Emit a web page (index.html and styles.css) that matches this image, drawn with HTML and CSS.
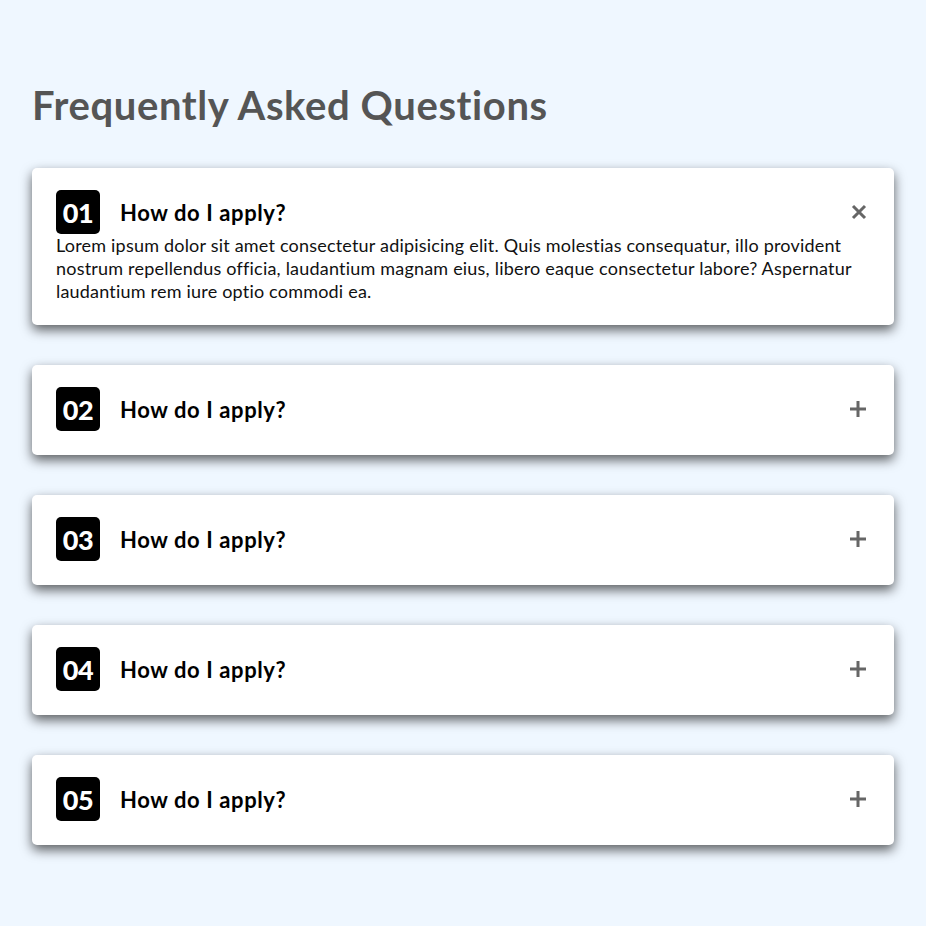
FILE: index.html
```html
<!DOCTYPE html>
<html lang="en">
<head>
  <meta charset="UTF-8">
  <meta name="viewport" content="width=device-width, initial-scale=1.0">
  <title>FAQ</title>
  <link rel="stylesheet" href="styles.css">
</head>
<body>

  <main class="faq">
    <h1 class="faq-title">Frequently Asked Questions</h1>

    <div class="faq-item open">
      <div class="faq-head">
        <span class="faq-num">01</span>
        <h3 class="faq-question">How do I apply?</h3>
        <button class="faq-toggle" aria-label="Toggle">
          <svg class="icon-close" viewBox="0 0 16 16" width="16" height="16"><path d="M2 2L14 14M14 2L2 14" /></svg>
          <svg class="icon-plus" viewBox="0 0 18 18" width="18" height="18"><path d="M9 1V17M1 9H17" /></svg>
        </button>
      </div>
      <p class="faq-answer">Lorem ipsum dolor sit amet consectetur adipisicing elit. Quis molestias consequatur, illo provident nostrum repellendus officia, laudantium magnam eius, libero eaque consectetur labore? Aspernatur laudantium rem iure optio commodi ea.</p>
    </div>

    <div class="faq-item">
      <div class="faq-head">
        <span class="faq-num">02</span>
        <h3 class="faq-question">How do I apply?</h3>
        <button class="faq-toggle" aria-label="Toggle">
          <svg class="icon-close" viewBox="0 0 16 16" width="16" height="16"><path d="M2 2L14 14M14 2L2 14" /></svg>
          <svg class="icon-plus" viewBox="0 0 18 18" width="18" height="18"><path d="M9 1V17M1 9H17" /></svg>
        </button>
      </div>
      <p class="faq-answer">Lorem ipsum dolor sit amet consectetur adipisicing elit. Quis molestias consequatur, illo provident nostrum repellendus officia, laudantium magnam eius, libero eaque consectetur labore? Aspernatur laudantium rem iure optio commodi ea.</p>
    </div>

    <div class="faq-item">
      <div class="faq-head">
        <span class="faq-num">03</span>
        <h3 class="faq-question">How do I apply?</h3>
        <button class="faq-toggle" aria-label="Toggle">
          <svg class="icon-close" viewBox="0 0 16 16" width="16" height="16"><path d="M2 2L14 14M14 2L2 14" /></svg>
          <svg class="icon-plus" viewBox="0 0 18 18" width="18" height="18"><path d="M9 1V17M1 9H17" /></svg>
        </button>
      </div>
      <p class="faq-answer">Lorem ipsum dolor sit amet consectetur adipisicing elit. Quis molestias consequatur, illo provident nostrum repellendus officia, laudantium magnam eius, libero eaque consectetur labore? Aspernatur laudantium rem iure optio commodi ea.</p>
    </div>

    <div class="faq-item">
      <div class="faq-head">
        <span class="faq-num">04</span>
        <h3 class="faq-question">How do I apply?</h3>
        <button class="faq-toggle" aria-label="Toggle">
          <svg class="icon-close" viewBox="0 0 16 16" width="16" height="16"><path d="M2 2L14 14M14 2L2 14" /></svg>
          <svg class="icon-plus" viewBox="0 0 18 18" width="18" height="18"><path d="M9 1V17M1 9H17" /></svg>
        </button>
      </div>
      <p class="faq-answer">Lorem ipsum dolor sit amet consectetur adipisicing elit. Quis molestias consequatur, illo provident nostrum repellendus officia, laudantium magnam eius, libero eaque consectetur labore? Aspernatur laudantium rem iure optio commodi ea.</p>
    </div>

    <div class="faq-item">
      <div class="faq-head">
        <span class="faq-num">05</span>
        <h3 class="faq-question">How do I apply?</h3>
        <button class="faq-toggle" aria-label="Toggle">
          <svg class="icon-close" viewBox="0 0 16 16" width="16" height="16"><path d="M2 2L14 14M14 2L2 14" /></svg>
          <svg class="icon-plus" viewBox="0 0 18 18" width="18" height="18"><path d="M9 1V17M1 9H17" /></svg>
        </button>
      </div>
      <p class="faq-answer">Lorem ipsum dolor sit amet consectetur adipisicing elit. Quis molestias consequatur, illo provident nostrum repellendus officia, laudantium magnam eius, libero eaque consectetur labore? Aspernatur laudantium rem iure optio commodi ea.</p>
    </div>
  </main>

  <script>
    // open / close a question when its button is clicked
    document.querySelectorAll('.faq-toggle').forEach(btn => {
      btn.addEventListener('click', () => {
        btn.closest('.faq-item').classList.toggle('open');
      });
    });
  </script>

</body>
</html>
```

FILE: styles.css
```css
body { margin: 0; background: #eff7ff; font-family: Lato, "Open Sans", sans-serif; color: #111; }
.faq { padding: 81px 32px 80px; }
.faq-title { margin: 0 0 39px; font-size: 40px; line-height: 48px; font-weight: 700; color: #555; letter-spacing: 0.6px; }
.faq-item { background: #fff; border-radius: 5px; padding: 22px 27px 24px 24px; margin-bottom: 40px; box-shadow: 0 5px 12px rgba(0, 0, 0, 0.62); }
.faq-item.open { padding-bottom: 22px; }
.faq-head { display: flex; align-items: center; }
.faq-num { width: 44px; height: 44px; border-radius: 5px; background: #000; color: #fff; font-size: 27px; font-weight: 900; display: flex; align-items: center; justify-content: center; letter-spacing: -0.5px; }
.faq-question { flex: 1; margin: 0 0 0 20px; font-size: 22px; font-weight: 700; color: #000; letter-spacing: 0.6px; }
.faq-toggle { background: none; border: 0; padding: 0; cursor: pointer; display: flex; }
.faq-toggle svg { stroke: #666; stroke-width: 3; fill: none; }
.faq-toggle .icon-close { display: none; }
.faq-item.open .icon-close { display: block; }
.faq-item.open .icon-plus { display: none; }
.faq-answer { display: none; margin: 0; font-size: 18px; line-height: 23px; color: #111; letter-spacing: 0.2px; }
.faq-item.open .faq-answer { display: block; }
```
